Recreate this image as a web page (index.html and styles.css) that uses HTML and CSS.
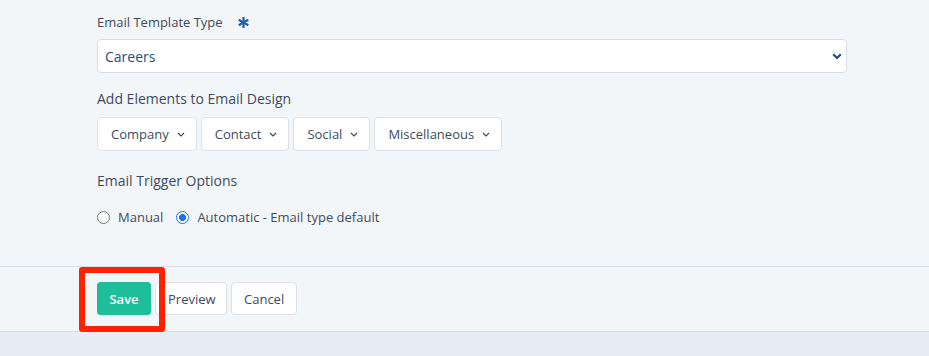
FILE: index.html
```html
<!DOCTYPE html>
<html>
<head>
<meta charset="utf-8">
<link rel="stylesheet" href="styles.css">
</head>
<body>
<div class="form">
  <div class="label-row">
    <span class="label small">Email Template Type</span>
    <svg class="req" width="11" height="11" viewBox="0 0 11 11"><g stroke="#1f63b0" stroke-width="2.2" stroke-linecap="butt"><line x1="5.5" y1="0" x2="5.5" y2="11"/><line x1="0.7" y1="2.75" x2="10.3" y2="8.25"/><line x1="0.7" y1="8.25" x2="10.3" y2="2.75"/></g></svg>
  </div>
  <div class="select">
    <span>Careers</span>
    <svg width="10" height="7" viewBox="0 0 10 7"><path d="M1.2 1.2 L5 5 L8.8 1.2" fill="none" stroke="#1f4e84" stroke-width="2.2"/></svg>
  </div>

  <div class="label sec">Add Elements to Email Design</div>
  <div class="btn-row">
    <button class="dd">Company <svg width="8" height="5" viewBox="0 0 8 5"><path d="M1 1 L4 4 L7 1" fill="none" stroke="#3d4b5e" stroke-width="1.2"/></svg></button>
    <button class="dd">Contact <svg width="8" height="5" viewBox="0 0 8 5"><path d="M1 1 L4 4 L7 1" fill="none" stroke="#3d4b5e" stroke-width="1.2"/></svg></button>
    <button class="dd">Social <svg width="8" height="5" viewBox="0 0 8 5"><path d="M1 1 L4 4 L7 1" fill="none" stroke="#3d4b5e" stroke-width="1.2"/></svg></button>
    <button class="dd">Miscellaneous <svg width="8" height="5" viewBox="0 0 8 5"><path d="M1 1 L4 4 L7 1" fill="none" stroke="#3d4b5e" stroke-width="1.2"/></svg></button>
  </div>

  <div class="label sec2">Email Trigger Options</div>
  <div class="radio-row">
    <label class="radio"><span class="circle"></span>Manual</label>
    <label class="radio"><span class="circle on"></span>Automatic - Email type default</label>
  </div>
</div>
<div class="footer">
  <div class="save-wrap">
    <button class="save">Save</button>
    <span class="highlight"></span>
  </div>
  <button class="plain">Preview</button>
  <button class="plain">Cancel</button>
</div>
<div class="bottom"></div>
</body>
</html>
```
FILE: styles.css
```css
* { box-sizing: border-box; }
body {
  margin: 0;
  background: #f3f6f9;
  font-family: "Open Sans", "Noto Sans", sans-serif;
  color: #3d4a5c;
}
.form {
  padding: 12px 0 0 97px;
  height: 266px;
}
.label {
  font-size: 14px;
  line-height: 20px;
  color: #3f4b5b;
}
.label.small { font-size: 13px; }
.label-row {
  display: flex;
  align-items: center;
  gap: 15px;
  height: 20px;
}
.req { margin-top: 1px; }
.select {
  margin-top: 7px;
  width: 750px;
  height: 34px;
  background: #fff;
  border: 1px solid #d9dfe6;
  border-radius: 4px;
  display: flex;
  align-items: center;
  justify-content: space-between;
  padding: 0 4px 0 7px;
  font-size: 14px;
  color: #1f4e84;
}
.sec { margin-top: 16px; }
.btn-row {
  margin-top: 8px;
  display: flex;
  gap: 4px;
}
button {
  font-family: "Open Sans", "Noto Sans", sans-serif;
  cursor: pointer;
}
.dd {
  height: 34px;
  background: #fff;
  border: 1px solid #dbe1e7;
  border-radius: 4px;
  font-size: 13px;
  color: #3d4b5e;
  display: flex;
  align-items: center;
  gap: 8px;
  padding: 0 11px 0 13px;
}
.sec2 { margin-top: 20px; }
.radio-row {
  margin-top: 16px;
  display: flex;
  gap: 13px;
  height: 20px;
  align-items: center;
}
.radio {
  display: flex;
  align-items: center;
  gap: 8px;
  font-size: 13px;
  color: #3f4b5b;
}
.circle {
  width: 13px;
  height: 13px;
  border-radius: 50%;
  border: 1px solid #767676;
  background: #fff;
}
.circle.on {
  border: 1.5px solid #1a73e8;
  background: radial-gradient(circle, #1a73e8 0 3.3px, #fff 3.8px);
}
.footer {
  border-top: 1px solid #d6dee6;
  border-bottom: 1px solid #d6dee6;
  padding: 15px 0 15px 97px;
  display: flex;
  gap: 4px;
  height: 66px;
}
.save-wrap { position: relative; }
.save {
  height: 33px;
  width: 54px;
  background: #1fbe9a;
  border: 1px solid #1fbe9a;
  border-radius: 3px;
  color: #fff;
  font-size: 13px;
  font-weight: 600;
}
.highlight {
  position: absolute;
  left: -18px;
  top: -15px;
  width: 86px;
  height: 65px;
  border: 6px solid #ff2200;
  border-radius: 3px;
  pointer-events: none;
}
.plain {
  height: 33px;
  background: #fff;
  border: 1px solid #dbe1e7;
  border-radius: 4px;
  font-size: 13px;
  color: #3d4b5e;
  padding: 0 12px;
}
.footer .plain:nth-of-type(1) { width: 72px; }
.footer .plain:last-child { width: 66px; }
.bottom {
  background: #e6edf4;
  height: 30px;
}
```
